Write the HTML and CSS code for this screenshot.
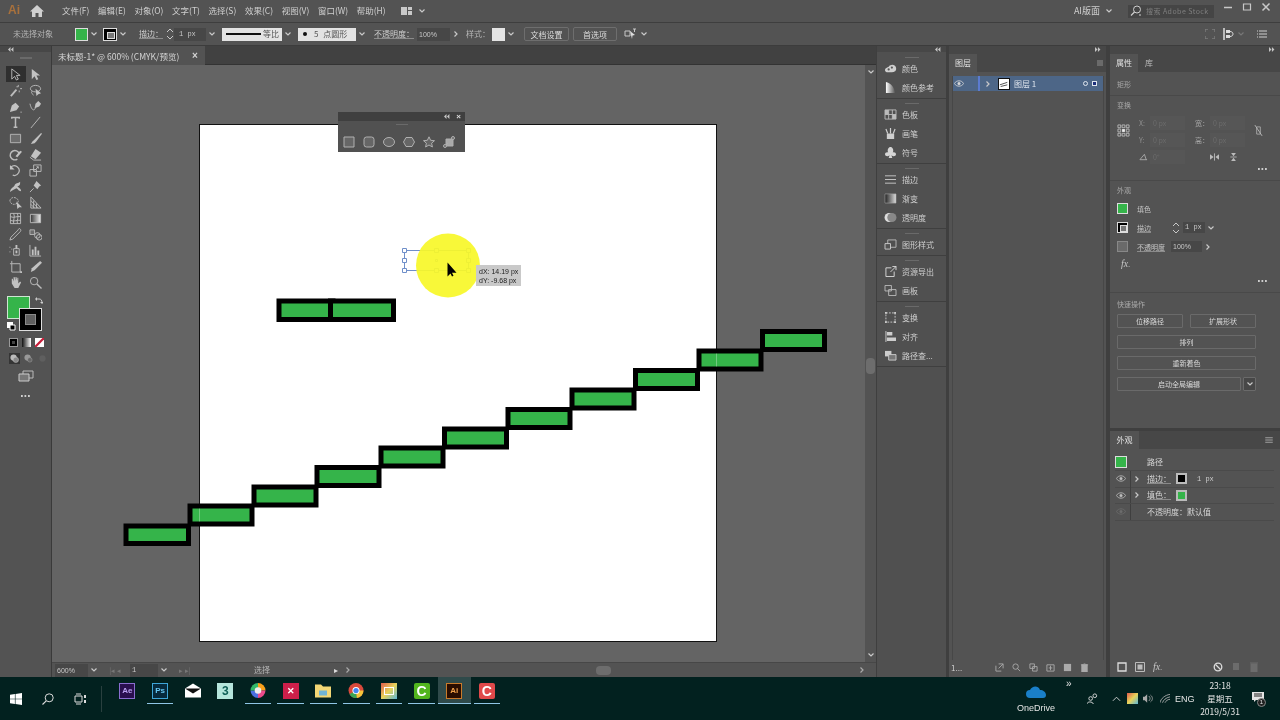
FILE: index.html
```html
<!DOCTYPE html>
<html lang="zh-CN">
<head>
<meta charset="utf-8">
<title>Illustrator</title>
<link rel="stylesheet" href="styles.css">
</head>
<body>
<svg class="sprite" aria-hidden="true">
  <symbol id="chev" viewBox="0 0 8 8"><path d="M1.5 2.5 4 5l2.5-2.5" fill="none" stroke="currentColor" stroke-width="1.2"/></symbol>
  <symbol id="right" viewBox="0 0 8 8"><path d="M2.5 1.5 5 4 2.5 6.5" fill="none" stroke="currentColor" stroke-width="1.2"/></symbol>
  <symbol id="spin" viewBox="0 0 8 14"><path d="M1 5 4 2l3 3M1 9l3 3 3-3" fill="none" stroke="currentColor"/></symbol>
  <symbol id="eye" viewBox="0 0 12 8"><path d="M.5 4C2 1.500 4 .8 6 .8S10 1.500 11.500 4C10 6.500 8 7.200 6 7.200S2 6.500 .5 4z" fill="none" stroke="currentColor"/><circle cx="6" cy="4" r="1.800" fill="currentColor"/></symbol>
  <symbol id="menu" viewBox="0 0 10 8"><path d="M0 1h10M0 4h10M0 7h10" stroke="currentColor"/></symbol>
  <symbol id="arrl" viewBox="0 0 8 6"><path d="M4 0 1 3l3 3zM7.500 0l-3 3 3 3z" fill="currentColor"/></symbol>
  <symbol id="arrr" viewBox="0 0 8 6"><path d="M1 0l3 3-3 3zM4.500 0l3 3-3 3z" fill="currentColor"/></symbol>
</svg>
<div class="app">
  <header class="titlebar">
    <span class="ai-logo">Ai</span>
    <svg class="home" viewBox="0 0 14 12"><path d="M7 0 0 6.500h2V12h3.500V8h3v4H12V6.500h2z" fill="#cfcfcf"/></svg>
    <nav class="menu">
      <span>文件(F)</span><span>编辑(E)</span><span>对象(O)</span><span>文字(T)</span><span>选择(S)</span><span>效果(C)</span><span>视图(V)</span><span>窗口(W)</span><span>帮助(H)</span>
    </nav>
    <svg class="layout-ic" viewBox="0 0 11 8"><path d="M0 0h6v8H0zM7 0h4v3H7zM7 4h4v4H7z" fill="#c9c9c9"/></svg>
    <svg class="chev chev-title"><use href="#chev"/></svg>
    <div class="spacer"></div>
    <span class="wsname">AI版面</span>
    <svg class="chev chev-ws"><use href="#chev"/></svg>
    <div class="search">
      <svg class="search-ic" viewBox="0 0 12 12"><circle cx="7" cy="4.500" r="3.500" fill="none" stroke="#cfcfcf"/><path d="M4.500 7 1 10.500M9 10h2" stroke="#cfcfcf" stroke-width="1.200"/></svg>
      <span>搜索 Adobe Stock</span>
    </div>
    <div class="winctl">
      <svg viewBox="0 0 10 10"><path d="M1 5.500h8" stroke="#c8c8c8" stroke-width="1.500"/></svg>
      <svg viewBox="0 0 10 10"><path d="M1.500 2h7v6h-7z" fill="none" stroke="#c8c8c8" stroke-width="1.200"/></svg>
      <svg viewBox="0 0 10 10"><path d="m1.500 1.500 7 7m0-7-7 7" stroke="#c8c8c8" stroke-width="1.500"/></svg>
    </div>
  </header>

  <section class="controlbar">
    <span class="c-noselect">未选择对象</span>
    <span class="swatch-green c-fill"></span>
    <svg class="chev"><use href="#chev"/></svg>
    <span class="stroke-mini c-stroke"></span>
    <svg class="chev"><use href="#chev"/></svg>
    <span class="ul c-label1">描边：</span>
    <svg class="spin"><use href="#spin"/></svg>
    <span class="field c-px">1 px</span>
    <svg class="chev"><use href="#chev"/></svg>
    <span class="lightbox c-line"><i class="lineprev"></i><b>等比</b></span>
    <svg class="chev"><use href="#chev"/></svg>
    <span class="lightbox c-dot"><i class="dotprev"></i><b>5 点圆形</b></span>
    <svg class="chev"><use href="#chev"/></svg>
    <span class="ul c-label2">不透明度：</span>
    <span class="field c-op">100%</span>
    <svg class="chev"><use href="#right"/></svg>
    <span class="c-label3">样式：</span>
    <span class="style-sw"></span>
    <svg class="chev"><use href="#chev"/></svg>
    <span class="btn c-b1">文档设置</span>
    <span class="btn c-b2">首选项</span>
    <svg class="c-arr" viewBox="0 0 14 12"><path d="M1 3h5v5H1z" fill="none" stroke="#c8c8c8"/><path d="m6 3 5 4-2.500.5L8 11z" fill="#ddd"/><path d="M9 1h3M10.500 1v3" stroke="#c8c8c8"/></svg>
    <svg class="chev"><use href="#chev"/></svg>
    <div class="spacer"></div>
    <svg class="c-r1" viewBox="0 0 10 10"><path d="M0 0h3M7 0h3M0 10h3M7 10h3M0 0v3M0 7v3M10 0v3M10 7v3" stroke="#7b7b7b" stroke-width="1.500" fill="none"/></svg>
    <svg class="c-r2" viewBox="0 0 12 12"><path d="M1 0v12" stroke="#ddd" stroke-width="1.500"/><path d="M3 2h4v3H3zM3 7h4v3H3z" fill="#ddd"/><path d="M7 3.500c4 0 4 5 0 5" stroke="#ddd" fill="none"/></svg>
    <svg class="chev c-r3"><use href="#chev"/></svg>
    <svg class="c-r4" viewBox="0 0 10 10"><path d="M0 1v2M0 4v2M0 7v2M2 2h8M2 5h8M2 8h8" stroke="#cfcfcf"/></svg>
  </section>

  <main class="workspace">
    <aside class="toolbar">
      <div class="tool-head"><svg class="arr"><use href="#arrl"/></svg></div>
      <div class="grip tool-grip"></div>
      <div class="tools">
        <span class="tool active"><svg viewBox="0 0 14 14"><path d="M3 1v11l3-3 2 4 2-1-2-4h4z"/></svg></span>
        <span class="tool"><svg viewBox="0 0 14 14"><path class="f" d="M3 1v11l3-3 2 4 2-1-2-4h4z"/></svg></span>
        <span class="tool"><svg viewBox="0 0 14 14"><path d="m2 13 6-7" stroke-width="2"/><path d="M10 1v2M8 3h2M12 5h2M11 7v2"/></svg></span>
        <span class="tool"><svg viewBox="0 0 14 14"><ellipse cx="7" cy="5" rx="5.500" ry="3.500"/><path class="f" d="m7 5 1 8 2-2 3-1z"/><path d="M3 8c-1 2 1 3 2 4"/></svg></span>
        <span class="tool"><svg viewBox="0 0 14 14"><path class="f" d="M1 13l2-7 4-3 4 4-3 4z"/><circle class="f" cx="13" cy="13" r=".7"/></svg></span>
        <span class="tool"><svg viewBox="0 0 14 14"><path d="M1 4c2 8 5 8 6 4"/><path class="f" d="m6 9 1-5 3-3 3 3-2 3z"/></svg></span>
        <span class="tool"><svg viewBox="0 0 14 14"><path d="M3 3V1.500h8V3M7 1.500V12M5 12h4" stroke-width="1.600"/></svg></span>
        <span class="tool"><svg viewBox="0 0 14 14"><path d="M2 13 12 1"/></svg></span>
        <span class="tool"><svg viewBox="0 0 14 14"><path class="g" d="M1.500 2.500h11v9h-11z"/></svg></span>
        <span class="tool"><svg viewBox="0 0 14 14"><path class="f" d="M13 1 6 8l-2 2-2 3 4-1 2-2 6-8z"/></svg></span>
        <span class="tool"><svg viewBox="0 0 14 14"><path d="M11 6a5 5 0 1 0-2 6" stroke-width="1.500"/><path class="f" d="M7 9 12 3l2 1-5 6z"/></svg></span>
        <span class="tool"><svg viewBox="0 0 14 14"><path class="f" d="m7 1 6 4-6 7-5-3z"/><path d="m1 10 4 3h8"/></svg></span>
        <span class="tool"><svg viewBox="0 0 14 14"><path d="M2 3.500A5.200 5.200 0 1 1 4 12" stroke-width="1.300"/><path class="f" d="M1 1v5h5z"/></svg></span>
        <span class="tool"><svg viewBox="0 0 14 14"><path d="M5 1h8v7H5zM1 6h7v7H1z"/><path d="m6 7 4-4M8 3h2v2"/></svg></span>
        <span class="tool"><svg viewBox="0 0 14 14"><path class="f" d="M1 13c1-5 4-5 5-7 1-3 4-2 6-4 0 3 0 4-3 5 2 2 4 2 4 5-3 0-3-2-5-3-2 1-4 2-7 4z"/></svg></span>
        <span class="tool"><svg viewBox="0 0 14 14"><path class="f" d="m8 1 5 5-2 1-2 3-4-4 2-3z"/><path d="m5 9-4 4"/></svg></span>
        <span class="tool"><svg viewBox="0 0 14 14"><path d="M1 5c1-5 8-4 9 0 0 3-3 4-5 4C3 9 1 7 1 5z" stroke-dasharray="2 1"/><path class="f" d="m8 6 1 8 2-2 3 0z"/></svg></span>
        <span class="tool"><svg viewBox="0 0 14 14"><path d="M2 1v12h11zM2 5l8 8M2 9l4 4M5 5v8M8 8v5"/></svg></span>
        <span class="tool"><svg viewBox="0 0 14 14"><path d="M1.500 1.500h11v11h-11zM1.500 5c4 2 7-1 11 0M1.500 9c4 2 7-1 11 0M5 1.500c2 4-1 7 0 11M9 1.500c2 4-1 7 0 11"/></svg></span>
        <span class="tool"><svg viewBox="0 0 14 14"><defs><linearGradient id="gr"><stop offset="0" stop-color="#333"/><stop offset="1" stop-color="#eee"/></linearGradient></defs><path d="M1.500 2.500h11v9h-11z" fill="url(#gr)"/></svg></span>
        <span class="tool"><svg viewBox="0 0 14 14"><path d="M12 1c1 1 1 2 0 3l-8 8-3 1 1-3 8-8c0-1 1-2 2-1z"/></svg></span>
        <span class="tool"><svg viewBox="0 0 14 14"><path class="g" d="M1 2h5v5H1z"/><circle cx="9" cy="8" r="3"/><circle cx="11" cy="10" r="3"/></svg></span>
        <span class="tool"><svg viewBox="0 0 14 14"><path d="M5 5h6v7H5z"/><path class="f" d="M7 1h2v4H7zM7 7h2v3H7z"/><path d="M1 3v1M3 5v1M1 8v1"/></svg></span>
        <span class="tool"><svg viewBox="0 0 14 14"><path d="M1 1v12h12"/><path class="f" d="M3 6h2v6H3zM6 3h2v9H6zM9 7h2v5H9z"/></svg></span>
        <span class="tool"><svg viewBox="0 0 14 14"><path d="M3 4h9v9H3zM1 4h2M3 1v3"/><path class="f" d="M12 12h2v2h-2z"/></svg></span>
        <span class="tool"><svg viewBox="0 0 14 14"><path class="f" d="M12 1 14 3 6 11 2 13 3 9z"/></svg></span>
        <span class="tool"><svg viewBox="0 0 14 14"><path class="f" d="M3 8V3h1l1 3V1h1l1 4V1h1l1 4V2h1v6l2-2 1 1-3 6H6z"/></svg></span>
        <span class="tool"><svg viewBox="0 0 14 14"><circle cx="5.500" cy="5.500" r="4"/><path d="m8.500 8.500 5 5" stroke-width="1.500"/></svg></span>
      </div>
      <div class="colorbox">
        <span class="big-fill"></span>
        <span class="big-stroke"><i></i></span>
        <svg class="swap" viewBox="0 0 8 8"><path d="M1 2h3c2 0 3 1 3 4" fill="none" stroke="#ccc"/><path class="sw" d="M2 0v4L0 2zM5 5h4L7 7z" fill="#ccc"/></svg>
        <svg class="deflt" viewBox="0 0 10 10"><path d="M1 1h6v6H1z" fill="#fff"/><path d="M4 4h5v5H4z" fill="#000" stroke="#fff"/></svg>
      </div>
      <div class="modes">
        <span class="m-color"><i></i></span>
        <span class="m-grad"></span>
        <svg viewBox="0 0 10 10"><path d="M0 0h10v10H0z" fill="#fff"/><path d="M0 10 10 0" stroke="#c81e3a" stroke-width="2.500"/></svg>
      </div>
      <div class="modes drawmodes">
        <span class="dm on"><svg viewBox="0 0 10 10"><circle cx="4" cy="4" r="3.500" fill="#bbb"/><circle cx="6.500" cy="6.500" r="3" fill="#888" stroke="#ccc" stroke-width=".5"/></svg></span>
        <span class="dm"><svg viewBox="0 0 10 10"><circle cx="4" cy="4" r="3.500" fill="#999"/><circle cx="6.500" cy="6.500" r="2.500" fill="#666" stroke="#aaa" stroke-width=".5"/></svg></span>
        <span class="dm"><svg viewBox="0 0 10 10"><circle cx="5" cy="5" r="3.500" fill="#5f5f5f"/></svg></span>
      </div>
      <svg class="screen-ic" viewBox="0 0 16 12"><path d="M5 1h10v7H5z" fill="#555" stroke="#bbb"/><path d="M1 4h10v7H1z" fill="#777" stroke="#ccc"/></svg>
      <div class="dots tool-dots"></div>
    </aside>

    <div class="docarea">
      <div class="tabbar">
        <div class="tab"><span>未标题-1* @ 600% (CMYK/预览)</span><b>×</b></div>
      </div>
      <div class="docmid">
        <div class="canvas">
          <svg class="art" viewBox="52 65 813 597">
            <rect x="199.500" y="124.500" width="517" height="517" fill="#fff" stroke="#111"/>
            <g class="bricks">
              <rect x="279" y="301" width="54" height="18.500"/>
              <rect x="330.500" y="301" width="63" height="18.500"/>
              <rect x="126" y="526" width="62.500" height="17.500"/>
              <rect x="190" y="506" width="62" height="18"/>
              <rect x="254" y="487" width="62" height="18"/>
              <rect x="317" y="467.500" width="62" height="18"/>
              <rect x="381" y="448" width="62" height="18"/>
              <rect x="444.500" y="429" width="62" height="18"/>
              <rect x="508" y="409.500" width="62" height="18"/>
              <rect x="572" y="390" width="62" height="18"/>
              <rect x="635.500" y="370.500" width="62" height="18"/>
              <rect x="699" y="351" width="62" height="18"/>
              <rect x="762.500" y="331.500" width="62" height="18"/>
            </g>
            <path d="M199.500 508.500v13M716.500 353.500v13" stroke="#fff" stroke-opacity=".3"/>
            <g class="selbox">
              <path d="M404.500 250.500h64v20h-64z"/>
              <path class="h" d="M402.500 248.500h4v4h-4zM402.500 258.500h4v4h-4zM402.500 268.500h4v4h-4zM434.500 248.500h4v4h-4zM434.500 268.500h4v4h-4zM466.500 248.500h4v4h-4zM466.500 258.500h4v4h-4zM466.500 268.500h4v4h-4zM435.500 259.500h2v2h-2z"/>
            </g>
            <circle cx="448" cy="265.500" r="32" fill="#f8f82a" fill-opacity=".93"/>
            <path d="M447.500 262.500v14l3-3 1.500 3 1.500-.7-1.500-3 4.500 0z" fill="#000"/>
          </svg>
          <div class="floatpanel">
            <div class="fp-head"><svg class="arr"><use href="#arrl"/></svg><span>×</span></div>
            <div class="grip fp-grip"></div>
            <div class="fp-icons">
              <svg viewBox="0 0 12 12"><path d="M1 1h10v10H1z"/></svg>
              <svg viewBox="0 0 12 12"><rect x="1" y="1" width="10" height="10" rx="2.500"/></svg>
              <svg viewBox="0 0 12 12"><ellipse cx="6" cy="6" rx="5.500" ry="4.500"/></svg>
              <svg viewBox="0 0 12 12"><path d="M3 1.500h6l2.500 4.500L9 10.500H3L.5 6z"/></svg>
              <svg viewBox="0 0 12 12"><path d="m6 .8 1.600 3.500 3.900.4-2.900 2.500.8 3.800L6 9l-3.400 2 .8-3.800L.5 4.700l3.900-.4z"/></svg>
              <svg viewBox="0 0 12 12"><path d="M3 3h7v7H3z" fill="#aaa"/><circle cx="2" cy="10" r="1.500"/><circle cx="10" cy="2" r="1.500"/><path d="m3 9 2-2"/></svg>
            </div>
          </div>
          <div class="smart"><span>dX: 14.19 px</span><span>dY: -9.68 px</span></div>
        </div>
        <div class="vscroll">
          <svg class="chev"><use href="#chev"/></svg>
          <span class="vthumb"></span>
          <svg class="chev"><use href="#chev"/></svg>
        </div>
      </div>
      <div class="statusbar">
        <span class="field s-zoom">600%</span>
        <svg class="chev"><use href="#chev"/></svg>
        <span class="s-nav s-nav1">|◂ ◂</span>
        <span class="field s-page">1</span>
        <svg class="chev"><use href="#chev"/></svg>
        <span class="s-nav s-nav2">▸ ▸|</span>
        <span class="s-sel">选择</span>
        <span class="s-play">▸</span>
        <svg class="chev s-left"><use href="#right"/></svg>
        <div class="hscroll"><span class="hthumb"></span></div>
        <svg class="chev s-right"><use href="#right"/></svg>
      </div>
    </div>

    <div class="dock dock-icons">
      <div class="strip strip-r"><svg class="arr"><use href="#arrl"/></svg></div>
      <div class="icongroup first">
        <div class="grip"></div>
        <div class="irow"><svg viewBox="0 0 14 12"><path d="M1 8c0-3 3-3 4-4 2-3 7-3 8 1 1 4-2 5-4 5H3C2 10 1 9 1 8z" fill="#cfcfcf"/><circle cx="5" cy="7" r="1.200" fill="#555"/><circle cx="8.500" cy="5" r="1.200" fill="#555"/></svg><span>颜色</span></div>
        <div class="irow"><svg viewBox="0 0 14 12"><path d="M2 12V0c5 1 9 5 10 12z" fill="url(#gr2)"/><defs><linearGradient id="gr2"><stop offset="0" stop-color="#fff"/><stop offset="1" stop-color="#555"/></linearGradient></defs></svg><span>颜色参考</span></div>
      </div>
      <div class="icongroup">
        <div class="grip"></div>
        <div class="irow"><svg viewBox="0 0 14 12"><path d="M1 1h12v10H1zM5 1v10M9 1v10M1 6h12" fill="none" stroke="#bbb"/><path d="M1 1h4v5H1zM9 6h4v5H9z" fill="#bbb"/></svg><span>色板</span></div>
        <div class="irow"><svg viewBox="0 0 14 12"><path d="M3 6h8v6H3z" fill="#cfcfcf"/><path d="M7 0v6M2 1l2 5M12 1l-2 5" stroke="#cfcfcf" stroke-width="1.300"/></svg><span>画笔</span></div>
        <div class="irow"><svg viewBox="0 0 14 12"><path d="M7 12H5l1-3c-2 2-5 1-5-1s2-3 3.500-2C3 3 5 0 7 0s4 3 2.500 6C11 5 13 6 13 8s-3 3-5 1l1 3z" fill="#d5d5d5"/></svg><span>符号</span></div>
      </div>
      <div class="icongroup">
        <div class="grip"></div>
        <div class="irow"><svg viewBox="0 0 14 12"><path d="M1 2h12M1 6h12M1 10h12" stroke="#ccc"/></svg><span>描边</span></div>
        <div class="irow"><svg viewBox="0 0 14 12"><defs><linearGradient id="gr3"><stop offset="0" stop-color="#222"/><stop offset="1" stop-color="#ddd"/></linearGradient></defs><path d="M1 1h12v10H1z" fill="url(#gr3)" stroke="#aaa" stroke-width=".6"/></svg><span>渐变</span></div>
        <div class="irow"><svg viewBox="0 0 14 12"><circle cx="5.500" cy="6" r="5" fill="#ddd"/><circle cx="8.500" cy="6" r="5" fill="#888"/></svg><span>透明度</span></div>
      </div>
      <div class="icongroup">
        <div class="grip"></div>
        <div class="irow"><svg viewBox="0 0 14 12"><path d="M4 1h9v8H4z" fill="none" stroke="#bbb"/><path d="M1 5h6v6H1z" fill="#555" stroke="#ccc"/></svg><span>图形样式</span></div>
      </div>
      <div class="icongroup">
        <div class="grip"></div>
        <div class="irow"><svg viewBox="0 0 14 12"><path d="M8 2H2v9.500h9V6M7 6.500l6-6M9 .5h4v4" fill="none" stroke="#ddd"/></svg><span>资源导出</span></div>
        <div class="irow"><svg viewBox="0 0 14 12"><path d="M1 .5h7v6H1zM5 5h8v6.500H5z" fill="none" stroke="#bbb"/></svg><span>画板</span></div>
      </div>
      <div class="icongroup">
        <div class="grip"></div>
        <div class="irow"><svg viewBox="0 0 14 12"><path d="M2 1h10v10H2z" fill="none" stroke="#ccc" stroke-dasharray="2 1.300"/><path d="M1 0h2v2H1zM11 0h2v2h-2zM1 10h2v2H1zM11 10h2v2h-2z" fill="#ccc"/></svg><span>变换</span></div>
        <div class="irow"><svg viewBox="0 0 14 12"><path d="M2 0v12" stroke="#ccc"/><path d="M3 1h6v4H3zM3 7h10v4H3z" fill="#ccc"/></svg><span>对齐</span></div>
        <div class="irow"><svg viewBox="0 0 14 12"><path d="M1 1h7v6H1z" fill="#ccc"/><path d="M5 5h8v6H5z" fill="#777" stroke="#ccc"/></svg><span>路径查...</span></div>
      </div>
    </div>

    <div class="dock dock-layers">
      <div class="strip strip-r"><svg class="arr"><use href="#arrr"/></svg></div>
      <div class="paneltabs"><span class="ptab">图层</span><div class="spacer"></div><i class="menu-sq"></i></div>
      <div class="layerlist">
        <div class="layerrow">
          <svg class="eye"><use href="#eye"/></svg>
          <i class="lbar"></i>
          <svg class="chev"><use href="#right"/></svg>
          <span class="lthumb"><svg viewBox="0 0 12 12"><path d="M1 7 10 4M2 9l8-2" stroke="#333"/></svg></span>
          <span class="lname">图层 1</span>
          <i class="ltarget"></i>
          <i class="lsel"></i>
        </div>
      </div>
      <div class="layerfoot">
        <span class="lcount">1...</span>
        <svg viewBox="0 0 10 10"><path d="M1 3v6h6M4 1h5v5M9 1 4 6" fill="none" stroke="#aaa"/></svg>
        <svg viewBox="0 0 10 10"><circle cx="4" cy="4" r="3" fill="none" stroke="#aaa"/><path d="m6 6 3 3" stroke="#aaa"/></svg>
        <svg viewBox="0 0 10 10"><path d="M1 1h5v5H1zM4 4h5v5H4z" fill="none" stroke="#aaa"/></svg>
        <svg viewBox="0 0 10 10"><path d="M1 2h8v7H1z" fill="none" stroke="#aaa"/><path d="M5 3v5M3 5.500h4" stroke="#aaa"/></svg>
        <svg viewBox="0 0 10 10"><path d="M1 1h8v8H1z" fill="#aaa"/></svg>
        <svg viewBox="0 0 10 10"><path d="M2 2h6v8H2zM1 2h8M4 0h2" fill="#aaa" stroke="#aaa"/></svg>
      </div>
    </div>

    <div class="dock dock-props">
      <div class="strip strip-r"><svg class="arr"><use href="#arrr"/></svg></div>
      <div class="propspanel">
        <div class="paneltabs"><span class="ptab">属性</span><span class="ptab off">库</span></div>
        <div class="psec sec-rect"><span class="sec-title">矩形</span></div>
        <div class="psec sec-trans">
          <span class="sec-title">变换</span>
          <div class="transform">
            <svg class="refgrid" viewBox="0 0 14 14"><path d="M1 1h3v3H1zM5.500 1h3v3h-3zM10 1h3v3h-3zM1 5.500h3v3H1zM10 5.500h3v3h-3zM1 10h3v3H1zM5.500 10h3v3h-3zM10 10h3v3h-3z" fill="none" stroke="#ccc" stroke-width=".8"/><path d="M5.500 5.500h3v3h-3z" fill="#eee"/></svg>
            <div class="tfields">
              <span class="tl">X:</span><span class="tf">0 px</span><span class="tl wl">宽：</span><span class="tf">0 px</span>
              <span class="tl">Y:</span><span class="tf">0 px</span><span class="tl wl">高：</span><span class="tf">0 px</span>
              <svg class="angle" viewBox="0 0 10 8"><path d="M1 7h8M1 7l5-6 2 6" fill="none" stroke="#aaa"/></svg><span class="tf tf-ang">0°</span>
              <div class="flips">
                <svg viewBox="0 0 10 8"><path d="M0 1v6l4-3zM10 1v6L6 4z" fill="#bbb"/><path d="M5 0v8" stroke="#bbb"/></svg>
                <svg viewBox="0 0 8 10"><path d="M1 0h6L4 4zM1 10h6L4 6z" fill="#bbb"/><path d="M0 5h8" stroke="#bbb"/></svg>
              </div>
            </div>
            <svg class="linkic" viewBox="0 0 10 14"><path d="M3 3h4v8H3z" fill="none" stroke="#aaa"/><path d="m1 1 8 12" stroke="#bbb"/></svg>
          </div>
          <div class="dots sec-dots"></div>
        </div>
        <div class="psec sec-appear">
          <span class="sec-title">外观</span>
          <div class="aprow"><span class="sw-green"></span><span class="aplabel">填色</span></div>
          <div class="aprow"><span class="stroke-mini small"></span><span class="aplabel ul">描边</span><svg class="spin"><use href="#spin"/></svg><span class="field ap-px">1 px</span><svg class="chev"><use href="#chev"/></svg></div>
          <div class="aprow"><span class="sw-op"></span><span class="aplabel ul">不透明度</span><span class="field ap-op">100%</span><svg class="chev"><use href="#right"/></svg></div>
          <div class="fx">fx<small>.</small></div>
          <div class="dots ap-dots"></div>
        </div>
        <div class="psec sec-quick">
          <span class="sec-title">快速操作</span>
          <div class="qrow"><span class="qbtn">位移路径</span><span class="qbtn">扩展形状</span></div>
          <div class="qrow"><span class="qbtn">排列</span></div>
          <div class="qrow"><span class="qbtn">重新着色</span></div>
          <div class="qrow tight"><span class="qbtn">启动全局编辑</span><span class="qbtn qdrop"><svg class="chev"><use href="#chev"/></svg></span></div>
        </div>
      </div>
      <div class="appearpanel">
        <div class="paneltabs tabs-ap"><span class="ptab">外观</span><div class="spacer"></div><svg class="menu-ic"><use href="#menu"/></svg></div>
        <div class="aplist">
          <div class="al-row al-head"><span class="sw-green big"></span><span class="al-name">路径</span></div>
          <div class="al-row"><svg class="eye"><use href="#eye"/></svg><i class="al-bar"></i><svg class="chev"><use href="#right"/></svg><span class="al-name ul-s">描边：</span><span class="al-sw al-black"></span><span class="al-val">1 px</span></div>
          <div class="al-row"><svg class="eye"><use href="#eye"/></svg><i class="al-bar"></i><svg class="chev"><use href="#right"/></svg><span class="al-name ul-s">填色：</span><span class="al-sw al-green"></span></div>
          <div class="al-row"><svg class="eye dim"><use href="#eye"/></svg><i class="al-bar"></i><span class="al-name al-noch">不透明度：默认值</span></div>
        </div>
        <div class="apfoot">
          <svg viewBox="0 0 10 10"><path d="M1 1h8v8H1z" fill="none" stroke="#ddd" stroke-width="1.300"/></svg>
          <svg viewBox="0 0 10 10"><path d="M.5.500h9v9h-9z" fill="none" stroke="#bbb"/><path d="M2.500 2.500h5v5h-5z" fill="#bbb"/></svg>
          <span class="fx small-fx">fx<small>.</small></span>
          <div class="spacer"></div>
          <svg viewBox="0 0 10 10"><circle cx="5" cy="5" r="3.800" fill="none" stroke="#ddd" stroke-width="1.300"/><path d="m2.500 2.500 5 5" stroke="#ddd" stroke-width="1.300"/></svg>
          <svg viewBox="0 0 10 10"><path d="M2 1h6v7H2z" fill="#6c6c6c"/></svg>
          <svg viewBox="0 0 10 10"><path d="M2 2h6v8H2zM1 1h8" fill="#6c6c6c" stroke="#6c6c6c"/></svg>
        </div>
      </div>
    </div>
  </main>

  <footer class="taskbar">
    <div class="tb-left">
      <svg class="tb-sys" viewBox="0 0 12 12"><path d="M0 1.700 4.900 1v4.700H0zM5.500.9 12 0v5.700H5.500zM0 6.300h4.900V11L0 10.300zM5.500 6.300H12V12l-6.500-.9z" fill="#fff"/></svg>
      <svg class="tb-sys" viewBox="0 0 12 12"><circle cx="7.200" cy="4.800" r="4" fill="none" stroke="#ddd"/><path d="M4.200 7.800.5 11.500" stroke="#ddd" stroke-width="1.100"/></svg>
      <svg class="tb-sys" viewBox="0 0 12 12"><path d="M1 3h7v6H1zM2 1h5M2 11h5" fill="none" stroke="#ddd"/><path d="M10 2h2v3h-2zM10 7h2v3h-2z" fill="#ddd"/></svg>
      <i class="tb-div"></i>
    </div>
    <div class="tb-apps">
      <span class="app-slot"><span class="app-ic ic-ae">Ae</span></span>
      <span class="app-slot run"><span class="app-ic ic-ps">Ps</span></span>
      <span class="app-slot"><svg class="app-svg" viewBox="0 0 16 14"><path d="M0 5 8 0l8 5v9H0z" fill="#fff"/><path d="m0 5 8 5 8-5" fill="#111"/></svg></span>
      <span class="app-slot"><span class="app-ic ic-3">3</span></span>
      <span class="app-slot run"><svg class="app-svg" viewBox="0 0 16 16"><path d="M8 0a8 8 0 0 1 8 8H8z" fill="#f9a01b"/><path d="M16 8a8 8 0 0 1-8 8V8z" fill="#ea4b8a"/><path d="M8 16a8 8 0 0 1-8-8h8z" fill="#4b6fe0"/><path d="M0 8a8 8 0 0 1 8-8v8z" fill="#33b86a"/><circle cx="8" cy="8" r="3.500" fill="#eee"/></svg></span>
      <span class="app-slot run"><span class="app-ic ic-x">✕</span></span>
      <span class="app-slot run"><svg class="app-svg" viewBox="0 0 16 14"><path d="M0 1h6l2 2h8v11H0z" fill="#f3d775"/><path d="M4 7h8v5H4z" fill="#6fb4d6"/></svg></span>
      <span class="app-slot run"><svg class="app-svg" viewBox="0 0 16 16"><circle cx="8" cy="8" r="8" fill="#d9493c"/><path d="M8 8 1 12a8 8 0 0 0 8 4z" fill="#3aa655"/><path d="M8 8h8a8 8 0 0 1-7 8z" fill="#f5c53a"/><circle cx="8" cy="8" r="3.800" fill="#fff"/><circle cx="8" cy="8" r="2.800" fill="#4285f4"/></svg></span>
      <span class="app-slot run"><span class="app-ic ic-cal"><i></i></span></span>
      <span class="app-slot run"><span class="app-ic ic-cam">C</span></span>
      <span class="app-slot run active"><span class="app-ic ic-ai">Ai</span></span>
      <span class="app-slot run"><span class="app-ic ic-red">C</span></span>
    </div>
    <div class="spacer"></div>
    <div class="onedrive">
      <svg viewBox="0 0 20 12"><path d="M4 12a4 4 0 0 1 0-8c2-4 8-5 10 0 3 0 6 2 6 5 0 2-1 3-3 3z" fill="#1a7fc8"/></svg>
      <span>OneDrive</span>
    </div>
    <span class="tb-more">»</span>
    <div class="tray">
      <svg class="tray-person" viewBox="0 0 12 12"><circle cx="4" cy="6" r="2" fill="none" stroke="#ddd"/><path d="M0 12c0-3 6-3 7 0" fill="none" stroke="#ddd"/><circle cx="8.500" cy="3" r="2" fill="none" stroke="#ddd"/></svg>
      <svg class="tray-up" viewBox="0 0 10 6"><path d="m1 5 4-4 4 4" fill="none" stroke="#ddd"/></svg>
      <span class="tray-app"></span>
      <svg class="tray-vol" viewBox="0 0 12 10"><path d="M0 3h2l3-3v10L2 7H0z" fill="#aaa"/><path d="M7 2c2 2 2 4 0 6M9 1c3 2 3 6 0 8" fill="none" stroke="#aaa"/></svg>
      <svg class="tray-wifi" viewBox="0 0 12 10"><path d="M0 10C1 5 6 1 12 0M3 10c1-3 4-6 9-7M6 10c1-2 3-4 6-4" fill="none" stroke="#bbb"/></svg>
      <span class="tray-eng">ENG</span>
    </div>
    <div class="clock"><span>23:18</span><span>星期五</span><span>2019/5/31</span></div>
    <div class="notify">
      <svg viewBox="0 0 12 11"><path d="M0 0h12v8H4L2 10V8H0z" fill="#e4e4e4"/><path d="M2 2h8M2 4h8" stroke="#222"/></svg>
      <b>1</b>
    </div>
  </footer>
</div>
</body>
</html>
```
FILE: styles.css
```css
* { box-sizing: border-box; }
html, body { margin: 0; padding: 0; background: #535353; }
body { width: 1280px; height: 720px; overflow: hidden; font-family: "Noto Sans CJK SC", "Liberation Sans", sans-serif; font-size: 8px; line-height: 12px; color: #cfcfcf; }
.sprite { display: none; }
i { display: block; font-style: normal; }
svg { display: block; flex: none; }
.app { width: 1280px; height: 720px; display: flex; flex-direction: column; filter: blur(.45px); }
.spacer { flex: 1; }
.chev { width: 8px; height: 8px; color: #c9c9c9; }
.spin { width: 8px; height: 14px; color: #c9c9c9; }
.arr { width: 7px; height: 5px; color: #c4c4c4; }
.ul { text-decoration: underline; text-decoration-color: #8a8a8a; text-underline-offset: 1px; }

/* title */
.titlebar { height: 23px; flex: none; display: flex; align-items: center; background: #535353; border-bottom: 1px solid #3e3e3e; }
.ai-logo { margin: -2px 0 0 8px; width: 14px; font: bold 12px/14px "Liberation Sans", sans-serif; color: #a9713c; }
.home { width: 14px; height: 12px; margin-left: 8px; }
.menu { display: flex; gap: 8.600px; margin: -2px 0 0 18px; font-size: 8.500px; }
.layout-ic { width: 11px; height: 8px; margin-left: 15px; }
.chev-title { margin-left: 6px; }
.wsname { font: 9px/12px "Noto Sans CJK SC", sans-serif; margin-top: -1px; }
.chev-ws { margin-left: 5px; }
.search { width: 86px; height: 13px; margin-left: 15px; background: #454545; display: flex; align-items: center; font: 7px/12px "Noto Sans CJK SC", "Liberation Mono", monospace; color: #7f7f7f; letter-spacing: .45px; white-space: nowrap; }
.search-ic { width: 12px; height: 12px; margin: 0 4px 0 2px; }
.winctl { display: flex; gap: 9px; margin: -8px 9px 0 9px; }
.winctl svg { width: 10px; height: 10px; }

/* control */
.controlbar { height: 23px; flex: none; display: flex; align-items: center; background: #535353; border-bottom: 1px solid #3c3c3c; white-space: nowrap; }
.controlbar > .chev { margin-left: 2px; }
.c-noselect { margin-left: 13px; width: 40px; color: #b2b2b2; }
.swatch-green { display: block; width: 13px; height: 13px; background: #35b44a; border: 1px solid #ddd; }
.c-fill { margin-left: 22px; }
.stroke-mini { display: block; width: 14px; height: 13px; border: 1px solid #ddd; background: #000; position: relative; }
.stroke-mini::after { content: ""; position: absolute; left: 3px; top: 3px; width: 6px; height: 5px; background: #777; border: 1px solid #ddd; }
.c-stroke { margin-left: 5px; }
.c-label1 { margin-left: 12px; width: 22px; }
.controlbar .spin { margin-left: 5px; }
.field { display: block; background: #474747; height: 13px; line-height: 13px; font-family: "Liberation Mono", monospace; font-size: 7px; color: #c8c8c8; white-space: nowrap; }
.c-px { width: 32px; padding-left: 5px; }
.lightbox { display: flex; align-items: center; height: 13px; background: #e3e3e3; color: #555; margin-left: 6px; padding-left: 4px; }
.c-line { width: 60px; }
.lineprev { width: 35px; height: 2px; background: #111; margin-right: 2px; }
.lightbox b { font-weight: 400; word-spacing: 3px; }
.c-dot { width: 58px; margin-left: 6px; }
.dotprev { width: 4px; height: 4px; border-radius: 50%; background: #111; margin: 0 7px 0 1px; }
.c-label2 { margin-left: 8px; width: 38px; }
.c-op { margin-left: 5px; width: 33px; padding-left: 2px; font-family: "Liberation Sans", sans-serif; }
.c-label3 { margin-left: 6px; width: 24px; color: #b7b7b7; }
.style-sw { display: block; width: 13px; height: 13px; background: #e4e4e4; margin-left: 2px; }
.btn { display: block; height: 14px; line-height: 13px; text-align: center; border: 1px solid #6e6e6e; border-radius: 2px; color: #dcdcdc; }
.c-b1 { width: 45px; margin-left: 9px; }
.c-b2 { width: 44px; margin-left: 4px; }
.c-arr { width: 14px; height: 12px; margin-left: 7px; }
.c-r1 { width: 10px; height: 10px; }
.c-r2 { width: 12px; height: 12px; margin-left: 8px; }
.c-r3 { color: #777; margin-left: 2px; }
.c-r4 { width: 10px; height: 10px; margin: 0 13px 0 12px; }

/* workspace */
.workspace { flex: 1; min-height: 0; display: flex; background: #3f3f3f; }
.toolbar { width: 52px; flex: none; background: #535353; border-right: 1px solid #3a3a3a; display: flex; flex-direction: column; align-items: center; position: relative; }
.tool-head { width: 100%; height: 6px; background: #474747; padding: 1px 0 0 7px; }
.grip { width: 14px; height: 2px; background: #6a6a6a; margin: 0 auto; }
.tool-grip { margin-top: 5px; margin-bottom: 7px; width: 12px; }
.tools { display: grid; grid-template-columns: 20px 20px; grid-auto-rows: 16px; }
.tool { display: flex; align-items: center; justify-content: center; }
.tool svg { width: 13px; height: 13px; fill: none; stroke: #bcbcbc; stroke-width: 1; }
.tool svg .f { fill: #c2c2c2; stroke: none; }
.tool svg .g { fill: #6d6d6d; stroke: #b5b5b5; }
.tool.active { background: #2f2f2f; }
.colorbox { position: relative; width: 40px; height: 38px; margin-top: 6px; }
.big-fill { position: absolute; left: 1px; top: 0; width: 23px; height: 23px; background: #35b44a; border: 1px solid #cfe5d2; }
.big-stroke { position: absolute; left: 13px; top: 12px; width: 23px; height: 23px; background: #000; border: 1px solid #dedede; padding: 5px; }
.big-stroke i { width: 11px; height: 11px; background: #606060; border: 1px solid #8a8a8a; }
.swap { position: absolute; left: 29px; top: 1px; width: 8px; height: 8px; }
.deflt { position: absolute; left: 0; top: 25px; width: 10px; height: 10px; }
.modes { display: flex; gap: 4px; width: 40px; margin-top: 4px; padding-left: 3px; justify-content: flex-start; }
.modes > * { width: 9px; height: 9px; }
.m-color { display: block; background: #000; border: 1px solid #999; padding: 2px; }
.m-color i { width: 3px; height: 3px; background: #444; }
.m-grad { display: block; background: linear-gradient(90deg, #111, #fff); }
.modes svg { width: 9px; height: 9px; }
.drawmodes { margin-top: 6px; gap: 3px; }
.drawmodes .dm { display: block; width: 11px; height: 11px; padding: 1px; }
.dm.on { background: #353535; }
.screen-ic { width: 16px; height: 12px; margin-top: 6px; }
.dots { width: 9px; height: 2px; background: radial-gradient(circle at 1px 1px, #cfcfcf 1px, transparent 1px) 0 0 / 3.500px 2px repeat-x; }
.tool-dots { margin-top: 13px; }

/* doc */
.docarea { width: 824px; flex: none; display: flex; flex-direction: column; }
.tabbar { height: 19px; flex: none; background: #414141; border-bottom: 1px solid #333; display: flex; }
.tab { width: 153px; height: 19px; background: #535353; display: flex; align-items: center; padding-left: 6px; font-size: 8.500px; color: #d4d4d4; }
.tab span { width: 131px; white-space: nowrap; }
.tab b { font: bold 10px/12px "Liberation Sans", sans-serif; margin-left: 3px; }
.docmid { flex: 1; min-height: 0; display: flex; }
.canvas { flex: 1; position: relative; background: #646464; overflow: hidden; }
.art { position: absolute; left: 0; top: 0; width: 813px; height: 597px; }
.bricks rect { fill: #35b44a; stroke: #000; stroke-width: 5; }
.selbox path { fill: none; stroke: #6f8fc9; stroke-width: 1; }
.selbox .h { fill: #fff; }
.floatpanel { position: absolute; left: 286px; top: 47px; width: 127px; height: 40px; background: #515151; }
.fp-head { height: 9px; background: #3f3f3f; display: flex; align-items: center; justify-content: flex-end; gap: 6px; padding-right: 4px; font: bold 8px/9px "Liberation Sans", sans-serif; color: #ddd; }
.fp-grip { margin-top: 3px; width: 12px; height: 1px; }
.fp-icons { display: flex; gap: 8px; padding: 11px 0 0 5px; }
.fp-icons svg { width: 12px; height: 12px; fill: #666; stroke: #b0b0b0; stroke-width: 1; }
.smart { position: absolute; left: 424px; top: 200px; width: 45px; height: 21px; background: #c9c9c9; color: #222; font: 7px/9px "Liberation Sans", sans-serif; display: flex; flex-direction: column; padding: 2px 0 0 3px; }
.vscroll { width: 11px; flex: none; background: #535353; display: flex; flex-direction: column; align-items: center; justify-content: space-between; padding: 3px 0; position: relative; }
.vthumb { position: absolute; left: 1px; top: 293px; width: 9px; height: 16px; border-radius: 4px; background: #6d6d6d; }
.statusbar { height: 15px; flex: none; background: #535353; display: flex; align-items: center; padding-left: 3px; border-top: 1px solid #474747; }
.s-zoom { width: 33px; padding-left: 2px; font-family: "Liberation Sans", sans-serif; }
.statusbar .chev { margin-left: 2px; }
.s-nav { width: 26px; font-size: 7px; color: #777; text-align: center; margin-left: 4px; white-space: nowrap; }
.s-page { width: 28px; margin-left: 2px; padding-left: 2px; }
.s-nav2 { margin-left: 4px; }
.s-sel { margin-left: 56px; width: 18px; color: #b5b5b5; }
.s-play { margin-left: 62px; width: 8px; color: #ddd; }
.s-left { margin-left: 0; color: #aaa; }
.hscroll { width: 504px; height: 13px; margin-left: 0; position: relative; }
.hthumb { position: absolute; left: 244px; top: 2px; width: 15px; height: 9px; border-radius: 4px; background: #6d6d6d; }
.s-right { color: #aaa; }

/* docks */
.dock { flex: none; display: flex; flex-direction: column; }
.dock-icons { width: 69px; margin-left: 1px; background: #505050; }
.strip { height: 6px; flex: none; background: #474747; display: flex; align-items: center; }
.strip-r { justify-content: flex-end; padding-right: 5px; }
.dock-layers { width: 157px; margin-left: 3px; background: #535353; }
.dock-props { width: 170px; margin-left: 4px; }
.icongroup { height: auto; padding: 4px 0 1px; border-bottom: 1px solid #3f3f3f; }
.icongroup.first { margin-top: 1px; }
.icongroup .grip { height: 1px; margin-bottom: 1px; }
.irow { height: 19px; display: flex; align-items: center; padding-left: 7px; }
.irow svg { width: 13px; height: 11px; margin-right: 5px; }
.paneltabs { height: 20px; flex: none; background: #474747; display: flex; align-items: flex-end; }
.ptab { width: 28px; height: 18px; background: #535353; color: #e0e0e0; text-align: center; line-height: 18px; }
.ptab.off { background: transparent; color: #bdbdbd; width: 22px; }
.menu-sq { width: 6px; height: 6px; background: #6a6a6a; margin: 0 3px 6px 0; }
.layerlist { flex: 1; margin: 4px 2px 0 3px; border-right: 1px solid #474747; border-left: 1px solid #474747; }
.layerrow { height: 15px; background: #4d6687; display: flex; align-items: center; padding-left: 1px; }
.eye { width: 10px; height: 7px; color: #d9d9d9; }
.layerrow .eye { margin-right: 14px; }
.lbar { width: 2px; height: 15px; background: #5b7bd0; margin-right: 4px; }
.lthumb { display: block; width: 12px; height: 12px; background: #fff; border: 1px solid #111; margin-left: 6px; }
.lname { margin-left: 4px; width: 69px; color: #dde3ec; }
.ltarget { width: 5px; height: 5px; border: 1px solid #dfe5ee; border-radius: 50%; }
.lsel { width: 5px; height: 5px; background: #1c2f7c; border: 1px solid #dfe5ee; margin-left: 4px; }
.layerfoot { height: 15px; flex: none; margin-bottom: 2px; display: flex; align-items: center; padding-left: 2px; }
.lcount { width: 44px; }
.layerfoot svg { width: 9px; height: 9px; margin-right: 8px; }
.propspanel { height: 376px; flex: none; background: #535353; display: flex; flex-direction: column; }
.psec { padding: 0 7px; border-bottom: 1px solid #494949; flex: none; color: #b5b5b5; position: relative; }
.sec-title { display: block; font-size: 7px; line-height: 10px; color: #a9a9a9; }
.sec-rect { height: 24px; padding-top: 7px; }
.sec-trans { height: 85px; padding-top: 4px; }
.transform { display: flex; margin-top: 4px; }
.refgrid { width: 13px; height: 13px; margin-top: 10px; }
.tfields { display: grid; grid-template-columns: 11px 35px 25px 35px; grid-auto-rows: 17px; margin-left: 9px; align-items: center; color: #8f8f8f; }
.tl { font-size: 7px; }
.wl { padding-left: 10px; color: #a5a5a5; white-space: nowrap; }
.tf { display: block; height: 14px; background: #565656; color: #6c6c6c; font-size: 7px; line-height: 14px; padding-left: 3px; }
.angle { width: 9px; height: 8px; }
.flips { grid-column: 3 / span 2; display: flex; gap: 10px; padding-left: 25px; align-items: center; }
.flips svg { width: 9px; height: 8px; }
.linkic { width: 9px; height: 13px; margin: 10px 0 0 9px; }
.sec-dots { position: absolute; right: 13px; bottom: 10px; }
.sec-appear { height: 112px; padding-top: 4px; }
.aprow { display: flex; align-items: center; height: 19px; font-size: 7px; color: #c5c5c5; }
.sec-appear .sec-title { margin-bottom: 4px; }
.sw-green { display: block; width: 11px; height: 11px; background: #35b44a; border: 1px solid #ddd; }
.stroke-mini.small { width: 11px; height: 11px; }
.stroke-mini.small::after { left: 2px; top: 2px; width: 5px; height: 5px; }
.sw-op { display: block; width: 11px; height: 11px; border: 1px solid #888; background: #6a6a6a; }
.aplabel { margin-left: 9px; width: 35px; white-space: nowrap; }
.aprow .spin { margin-left: 0; }
.ap-px { width: 22px; margin-left: 3px; padding-left: 2px; height: 11px; line-height: 11px; }
.ap-op { width: 31px; margin-left: -1px; padding-left: 2px; height: 11px; line-height: 11px; font-family: "Liberation Sans", sans-serif; }
.aprow .chev { margin-left: 2px; }
.fx { font: italic 10px/12px "Liberation Serif", serif; color: #c5c5c5; padding-left: 4px; margin-top: 2px; }
.ap-dots { position: absolute; right: 13px; bottom: 10px; }
.sec-quick { padding-top: 6px; border-bottom: 0; }
.qrow { display: flex; gap: 7px; margin-top: 7px; width: 139px; }
.sec-quick .sec-title { margin-bottom: 5px; }
.sec-quick .qrow:nth-child(2) { margin-top: 0; }
.qrow.tight { gap: 2px; }
.qbtn { flex: 1; height: 14px; border: 1px solid #6a6a6a; border-radius: 1px; text-align: center; font-size: 7px; line-height: 12px; color: #d9d9d9; }
.qdrop { flex: none; width: 13px; background: #474747; display: flex; align-items: center; justify-content: center; }
.appearpanel { height: 246px; flex: none; margin-top: 3px; background: #535353; display: flex; flex-direction: column; }
.tabs-ap { height: 18px; align-items: stretch; }
.tabs-ap .ptab { width: 29px; }
.menu-ic { width: 8px; height: 6px; margin: 6px 7px 0 0; color: #bdbdbd; }
.aplist { flex: 1; margin: 5px 6px 0 5px; }
.al-row { height: 16.500px; display: flex; align-items: center; border-bottom: 1px solid #4a4a4a; }
.al-row .eye { margin-left: 1px; margin-right: 4px; color: #bdbdbd; width: 10px; }
.al-row .eye.dim { color: #6c6c6c; }
.al-head { height: 17px; }
.sw-green.big { width: 12px; height: 12px; }
.al-bar { width: 1px; height: 16px; background: #3f3f3f; margin-right: 2px; }
.al-name { margin-left: 6px; color: #d5d5d5; white-space: nowrap; }
.al-head .al-name { margin-left: 20px; }
.ul-s { text-decoration: underline; text-decoration-color: #8a8a8a; width: 29px; }
.al-noch { margin-left: 14px; }
.al-sw { display: block; width: 11px; height: 11px; border: 2px solid #bbb; }
.al-black { background: #000; }
.al-green { background: #35b44a; }
.al-val { font: 7px/12px "Liberation Mono", monospace; margin-left: 10px; }
.apfoot { height: 16px; flex: none; margin: 0 0 2px 7px; padding-right: 21px; display: flex; align-items: center; gap: 8px; }
.apfoot svg { width: 10px; height: 10px; }
.small-fx { padding: 0; margin: 0; }
.apfoot .spacer + svg { margin-right: 0; }

/* taskbar */
.taskbar { height: 43px; flex: none; background: #02211f; display: flex; align-items: flex-start; color: #e4e4e4; }
.tb-left { display: flex; align-items: center; height: 43px; padding-left: 10px; width: 111px; flex: none; }
.tb-sys { width: 12px; height: 12px; margin-right: 20px; }
.tb-div { width: 1px; height: 26px; background: #2a403f; margin-left: -5px; }
.tb-apps { display: flex; height: 28px; }
.app-slot { width: 32.700px; height: 27px; display: flex; align-items: center; justify-content: center; position: relative; }
.app-slot.run::after { content: ""; position: absolute; left: 3px; right: 3px; bottom: 0; height: 1px; background: #8fc6e6; }
.app-slot.active { background: #2f4a4a; }
.app-slot.active::after { left: 0; right: 0; }
.app-ic { display: block; width: 16px; height: 16px; text-align: center; font: 700 8px/14px "Liberation Sans", sans-serif; }
.app-svg { width: 16px; height: 15px; }
.ic-ae { background: #2a0f4f; border: 1px solid #8a6dd0; color: #b9a0f0; }
.ic-ps { background: #062a3d; border: 1px solid #3ea5d8; color: #66c6f2; }
.ic-3 { background: #b5e6dc; color: #0e5e55; font-size: 12px; line-height: 16px; }
.ic-x { background: #cc1f4a; color: #fff; font-size: 9px; line-height: 16px; }
.ic-cal { background: linear-gradient(135deg, #e05a4c, #e8d45a 50%, #5ab6d8); padding: 4px 3px; }
.ic-cal i { width: 10px; height: 8px; border: 1px solid #fff; }
.ic-cam { background: #52b51e; color: #fff; font-size: 14px; line-height: 16px; border-radius: 2px; }
.ic-ai { background: #2a0d00; border: 1px solid #c97a2a; color: #f2a24a; }
.ic-red { background: #e0494a; color: #fff; font-size: 14px; line-height: 16px; border-radius: 2px; }
.onedrive { width: 60px; display: flex; flex-direction: column; align-items: center; padding-top: 9px; font: 9px/11px "Liberation Sans", sans-serif; margin-right: 0; }
.onedrive svg { width: 20px; height: 12px; margin-bottom: 5px; }
.tb-more { font: 10px/12px "Liberation Sans", sans-serif; margin-top: 1px; width: 12px; }
.tray { display: flex; align-items: center; height: 43px; padding-left: 9px; }
.tray-person { width: 11px; height: 11px; }
.tray-up { width: 9px; height: 6px; margin-left: 14px; }
.tray-app { display: block; width: 11px; height: 11px; margin-left: 6px; background: linear-gradient(135deg, #e05a4c, #e8d45a 50%, #5ab6d8); }
.tray-vol { width: 10px; height: 9px; margin-left: 5px; }
.tray-wifi { width: 10px; height: 9px; margin-left: 7px; }
.tray-eng { font: 9px/12px "Liberation Sans", sans-serif; margin-left: 5px; width: 20px; }
.clock { width: 50px; margin-left: 0; display: flex; flex-direction: column; align-items: center; padding-top: 2px; font: 8.500px/13px "Noto Sans CJK SC", "Liberation Sans", sans-serif; white-space: nowrap; }
.notify { position: relative; width: 12px; margin: 15px 16px 0 7px; }
.notify svg { width: 12px; height: 11px; }
.notify b { position: absolute; left: 5px; top: 6px; width: 9px; height: 9px; border-radius: 50%; background: #222; border: 1px solid #888; font: 6px/7px "Liberation Sans", sans-serif; text-align: center; }
```
